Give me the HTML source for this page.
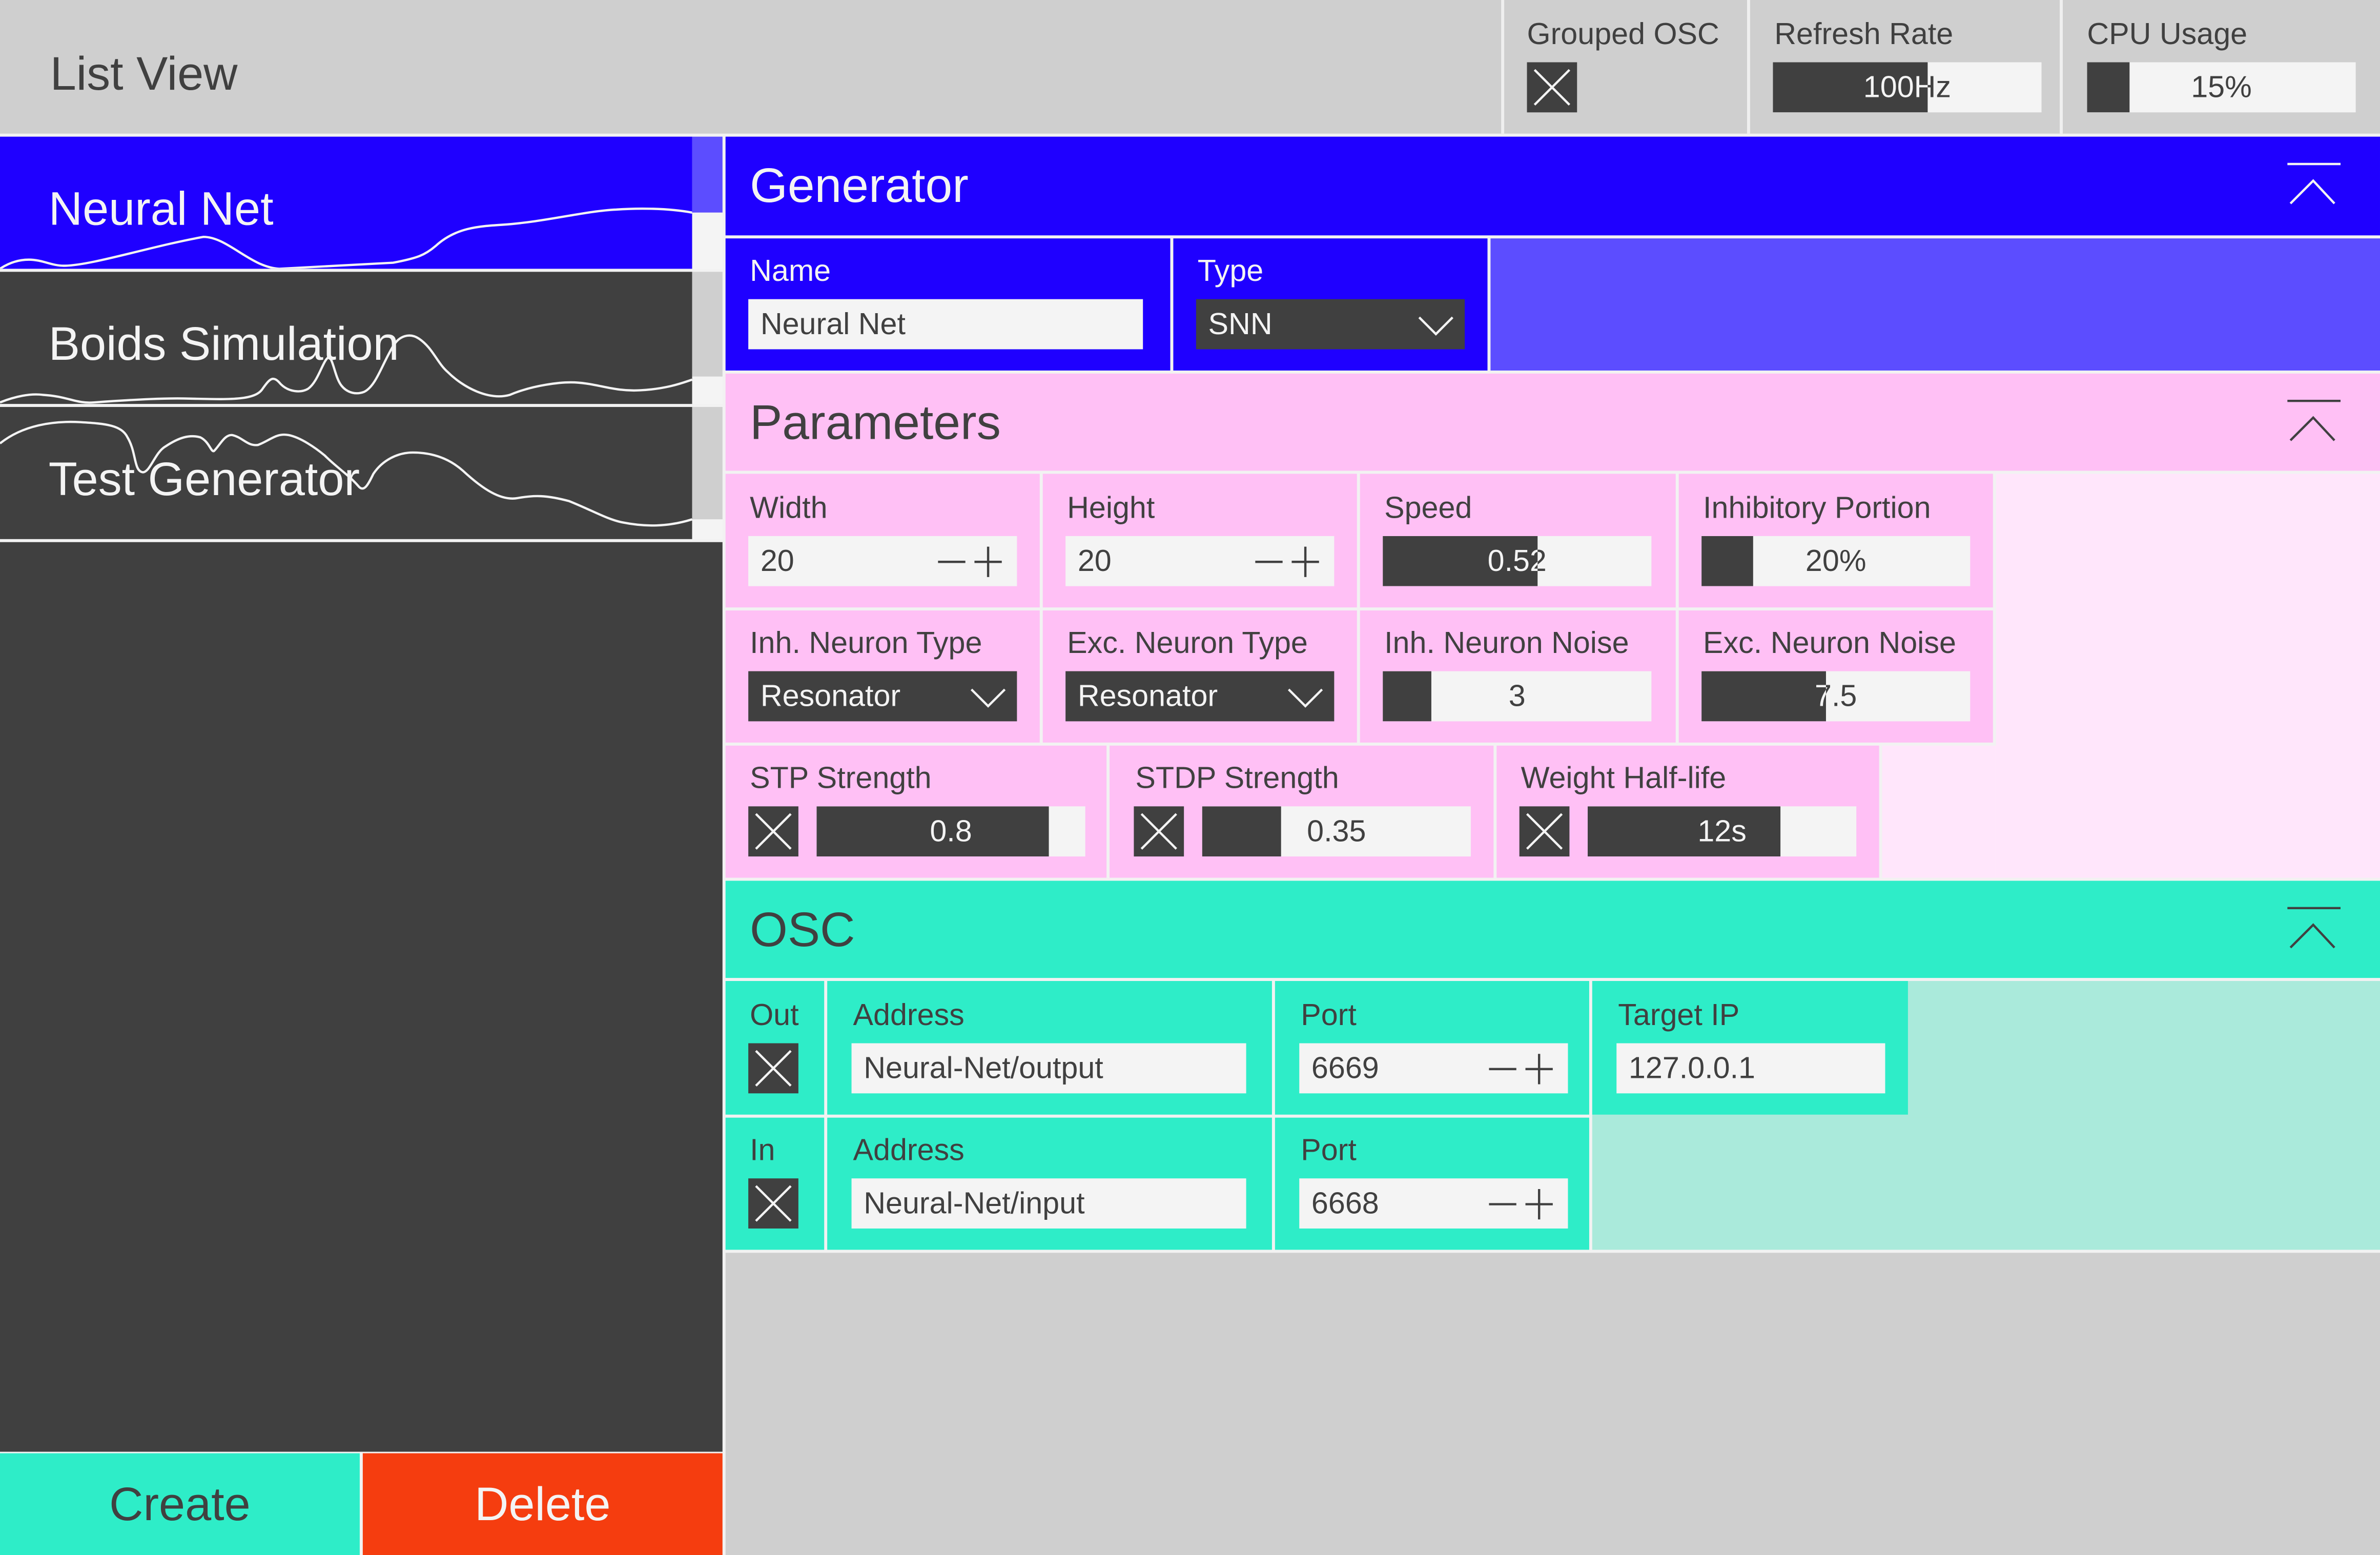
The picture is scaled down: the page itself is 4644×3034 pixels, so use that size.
<!DOCTYPE html>
<html><head><meta charset="utf-8"><style>
*{margin:0;padding:0;box-sizing:border-box}
html,body{width:4644px;height:3034px;overflow:hidden;background:#f2f2f2}
#w{position:absolute;left:0;top:0;width:1568px;height:1024px;transform-origin:0 0;transform:scale(2.96173,2.96289);font-family:"Liberation Sans",sans-serif;color:#404040}
.a{position:absolute}
.lbl{position:absolute;font-size:20px;white-space:nowrap;line-height:1}
.in{position:absolute;background:#f4f4f4;height:33px;font-size:20px;line-height:35px;padding-left:8px;white-space:nowrap;overflow:hidden}
.dd{position:absolute;background:#404040;color:#f4f4f4;height:33px;font-size:20px;line-height:35px;padding-left:8px;white-space:nowrap}
.sl{position:absolute;background:#f4f4f4;height:33px;overflow:hidden}
.sl .t{position:absolute;left:0;top:0;height:33px;line-height:35px;font-size:20px;text-align:center;white-space:nowrap}
.sl .f{position:absolute;left:0;top:0;height:33px;background:#404040;overflow:hidden}
.sl .f .t{color:#f4f4f4}
.cb{position:absolute;width:33px;height:33px;background:#404040}
.h{position:absolute;font-size:32px;line-height:1;white-space:nowrap}
</style></head><body><div id="w">
<!-- top bar -->
<div class="a" style="left:0;top:0;width:1568px;height:88px;background:#cfcfcf"></div>
<div class="h" style="left:33px;top:33px;font-size:31px">List View</div>
<div class="a" style="left:989px;top:0;width:2px;height:88px;background:#efefef"></div>
<div class="a" style="left:1151px;top:0;width:2px;height:88px;background:#efefef"></div>
<div class="a" style="left:1357px;top:0;width:2px;height:88px;background:#efefef"></div>
<div class="lbl" style="left:1006px;top:13px">Grouped OSC</div>
<div class="cb" style="left:1006px;top:41px"><svg width="33" height="33"><path d="M5 5L28 28M28 5L5 28" stroke="#f4f4f4" stroke-width="1.5"/></svg></div>
<div class="lbl" style="left:1169px;top:13px">Refresh Rate</div>
<div class="sl" style="left:1168px;top:41px;width:177px"><span class="t" style="width:177px;left:0">100Hz</span><div class="f" style="width:102px"><span class="t" style="width:177px">100Hz</span></div></div>
<div class="lbl" style="left:1375px;top:13px">CPU Usage</div>
<div class="sl" style="left:1375px;top:41px;width:177px"><span class="t" style="width:177px">15%</span><div class="f" style="width:28px"><span class="t" style="width:177px">15%</span></div></div>

<!-- left list -->
<div class="a" style="left:0;top:357px;width:476px;height:599px;background:#404040"></div>
<div class="a" style="left:0;top:90px;width:456px;height:87px;background:#1f00ff;overflow:hidden">
<svg class="a" style="left:0;top:0" width="456" height="87"><path d="M0 87C6 83 12 81 19 81C28 81 34 85 42 85C60 85 100 72 134 66C150 66 165 86 184 87L259 83C275 80 280 78 287 72C300 60 315 59 331 58C360 56 385 49 406 48C420 47 440 47 456 50" fill="none" stroke="#f4f4f4" stroke-width="1.5"/></svg>
<div class="h" style="left:32px;top:32px;color:#f4f4f4;font-size:31px">Neural Net</div></div>
<div class="a" style="left:456px;top:90px;width:20px;height:50px;background:#5c4dff"></div>
<div class="a" style="left:456px;top:140px;width:20px;height:37px;background:#f4f4f4"></div>
<div class="a" style="left:0;top:179px;width:456px;height:87px;background:#404040;overflow:hidden">
<svg class="a" style="left:0;top:0" width="456" height="87"><path d="M0 86C10 82 20 80 28 81C45 82 50 87 62 86C90 84 110 83 125 83.5C150 84 168 85 173 77C178 70 180 68 185 74C190 79 198 80 203 77C210 72 213 57 217 56C220 60 221 70 225 75C229 80 235 81 240 79C248 75 252 60 259 49C263 42 270 40 276 44C285 50 288 60 295 66C305 76 322 85 336 81C350 75 370 72 381 73C395 74 405 79 422 78C440 77 450 73 456 71" fill="none" stroke="#f4f4f4" stroke-width="1.5"/></svg>
<div class="h" style="left:32px;top:32px;color:#f4f4f4;font-size:31px">Boids Simulation</div></div>
<div class="a" style="left:456px;top:179px;width:20px;height:69px;background:#cfcfcf"></div>
<div class="a" style="left:456px;top:248px;width:20px;height:18px;background:#f4f4f4"></div>
<div class="a" style="left:0;top:268px;width:456px;height:87px;background:#404040;overflow:hidden">
<svg class="a" style="left:0;top:0" width="456" height="87"><path d="M0 24C15 12 35 9 53 10C70 11 80 12 84 20C90 30 88 42 94 43C99 43 102 30 109 26C118 20 125 18 132 20C138 23 139 30 141 29C145 25 148 18 153 18.5C160 20 163 26 170 25C178 22 182 17 190 18.5C198 20 208 27 214 32C222 40 230 45 236 52C240 57 243 50 246 44C252 35 262 30 272 30C285 30 296 34 305 42C318 54 330 62 341 60C352 58 360 58 375 62C390 68 400 74 410 76C425 79 440 79 456 74" fill="none" stroke="#f4f4f4" stroke-width="1.5"/></svg>
<div class="h" style="left:32px;top:32px;color:#f4f4f4;font-size:31px">Test Generator</div></div>
<div class="a" style="left:456px;top:268px;width:20px;height:74px;background:#cfcfcf"></div>
<div class="a" style="left:456px;top:342px;width:20px;height:13px;background:#f4f4f4"></div>
<div class="a" style="left:0;top:957px;width:237px;height:67px;background:#2eedc8"></div>
<div class="h" style="left:0;top:975px;width:237px;text-align:center;font-size:31px">Create</div>
<div class="a" style="left:239px;top:957px;width:237px;height:67px;background:#f53d0f"></div>
<div class="h" style="left:239px;top:975px;width:237px;text-align:center;font-size:31px;color:#f4f4f4">Delete</div>

<!-- right -->
<div class="a" style="left:478px;top:825px;width:1090px;height:199px;background:#cfcfcf"></div>
<!-- generator -->
<div class="a" style="left:478px;top:90px;width:1090px;height:65px;background:#1f00ff"></div>
<div class="h" style="left:494px;top:106px;color:#f4f4f4">Generator</div>
<svg class="a" style="left:1500px;top:100px" width="50" height="45"><path d="M7 8H42M9 34L24 19L38 34" fill="none" stroke="#f4f4f4" stroke-width="1.5"/></svg>
<div class="a" style="left:478px;top:157px;width:293px;height:87px;background:#1f00ff"></div>
<div class="a" style="left:773px;top:157px;width:207px;height:87px;background:#1f00ff"></div>
<div class="a" style="left:982px;top:157px;width:586px;height:87px;background:#5c4dff"></div>
<div class="lbl" style="left:494px;top:169px;color:#f4f4f4">Name</div>
<div class="in" style="left:493px;top:197px;width:260px">Neural Net</div>
<div class="lbl" style="left:789px;top:169px;color:#f4f4f4">Type</div>
<div class="dd" style="left:788px;top:197px;width:177px;background:#404040">SNN<svg class="a" style="right:6px;top:8px" width="26" height="18"><path d="M2 4L13 15L24 4" fill="none" stroke="#f4f4f4" stroke-width="1.5"/></svg></div>
<!-- parameters -->
<div class="a" style="left:478px;top:246px;width:1090px;height:64px;background:#ffc0f5"></div>
<div class="h" style="left:494px;top:262px">Parameters</div>
<svg class="a" style="left:1500px;top:256px" width="50" height="45"><path d="M7 8H42M9 34L24 19L38 34" fill="none" stroke="#404040" stroke-width="1.5"/></svg>
<div class="a" style="left:1315px;top:312px;width:253px;height:266px;background:#ffe6fb"></div>
<div class="a" style="left:1240px;top:491px;width:75px;height:87px;background:#ffe6fb"></div>
<div class="a" style="left:478px;top:312px;width:207px;height:88px;background:#ffc0f5"></div>
<div class="a" style="left:687px;top:312px;width:207px;height:88px;background:#ffc0f5"></div>
<div class="a" style="left:896px;top:312px;width:208px;height:88px;background:#ffc0f5"></div>
<div class="a" style="left:1106px;top:312px;width:207px;height:88px;background:#ffc0f5"></div>
<div class="a" style="left:478px;top:402px;width:207px;height:87px;background:#ffc0f5"></div>
<div class="a" style="left:687px;top:402px;width:207px;height:87px;background:#ffc0f5"></div>
<div class="a" style="left:896px;top:402px;width:208px;height:87px;background:#ffc0f5"></div>
<div class="a" style="left:1106px;top:402px;width:207px;height:87px;background:#ffc0f5"></div>
<div class="a" style="left:478px;top:491px;width:251px;height:87px;background:#ffc0f5"></div>
<div class="a" style="left:731px;top:491px;width:253px;height:87px;background:#ffc0f5"></div>
<div class="a" style="left:986px;top:491px;width:252px;height:87px;background:#ffc0f5"></div>

<div class="lbl" style="left:494px;top:325px">Width</div>
<div class="in" style="left:493px;top:353px;width:177px">20<svg class="a" style="right:6px;top:5px" width="48" height="24"><path d="M2 12H20M26 12H44M35 2V22" fill="none" stroke="#404040" stroke-width="1.5"/></svg></div>
<div class="lbl" style="left:703px;top:325px">Height</div>
<div class="in" style="left:702px;top:353px;width:177px">20<svg class="a" style="right:6px;top:5px" width="48" height="24"><path d="M2 12H20M26 12H44M35 2V22" fill="none" stroke="#404040" stroke-width="1.5"/></svg></div>
<div class="lbl" style="left:912px;top:325px">Speed</div>
<div class="sl" style="left:911px;top:353px;width:177px"><span class="t" style="width:177px">0.52</span><div class="f" style="width:102px"><span class="t" style="width:177px">0.52</span></div></div>
<div class="lbl" style="left:1122px;top:325px">Inhibitory Portion</div>
<div class="sl" style="left:1121px;top:353px;width:177px"><span class="t" style="width:177px">20%</span><div class="f" style="width:34px"><span class="t" style="width:177px">20%</span></div></div>

<div class="lbl" style="left:494px;top:414px">Inh. Neuron Type</div>
<div class="dd" style="left:493px;top:442px;width:177px">Resonator<svg class="a" style="right:6px;top:8px" width="26" height="18"><path d="M2 4L13 15L24 4" fill="none" stroke="#f4f4f4" stroke-width="1.5"/></svg></div>
<div class="lbl" style="left:703px;top:414px">Exc. Neuron Type</div>
<div class="dd" style="left:702px;top:442px;width:177px">Resonator<svg class="a" style="right:6px;top:8px" width="26" height="18"><path d="M2 4L13 15L24 4" fill="none" stroke="#f4f4f4" stroke-width="1.5"/></svg></div>
<div class="lbl" style="left:912px;top:414px">Inh. Neuron Noise</div>
<div class="sl" style="left:911px;top:442px;width:177px"><span class="t" style="width:177px">3</span><div class="f" style="width:32px"><span class="t" style="width:177px">3</span></div></div>
<div class="lbl" style="left:1122px;top:414px">Exc. Neuron Noise</div>
<div class="sl" style="left:1121px;top:442px;width:177px"><span class="t" style="width:177px">7.5</span><div class="f" style="width:82px"><span class="t" style="width:177px">7.5</span></div></div>

<div class="lbl" style="left:494px;top:503px">STP Strength</div>
<div class="cb" style="left:493px;top:531px"><svg width="33" height="33"><path d="M5 5L28 28M28 5L5 28" stroke="#f4f4f4" stroke-width="1.5"/></svg></div>
<div class="sl" style="left:538px;top:531px;width:177px"><span class="t" style="width:177px">0.8</span><div class="f" style="width:153px"><span class="t" style="width:177px">0.8</span></div></div>
<div class="lbl" style="left:748px;top:503px">STDP Strength</div>
<div class="cb" style="left:747px;top:531px"><svg width="33" height="33"><path d="M5 5L28 28M28 5L5 28" stroke="#f4f4f4" stroke-width="1.5"/></svg></div>
<div class="sl" style="left:792px;top:531px;width:177px"><span class="t" style="width:177px">0.35</span><div class="f" style="width:52px"><span class="t" style="width:177px">0.35</span></div></div>
<div class="lbl" style="left:1002px;top:503px">Weight Half-life</div>
<div class="cb" style="left:1001px;top:531px"><svg width="33" height="33"><path d="M5 5L28 28M28 5L5 28" stroke="#f4f4f4" stroke-width="1.5"/></svg></div>
<div class="sl" style="left:1046px;top:531px;width:177px"><span class="t" style="width:177px">12s</span><div class="f" style="width:127px"><span class="t" style="width:177px">12s</span></div></div>

<!-- OSC -->
<div class="a" style="left:478px;top:580px;width:1090px;height:64px;background:#2eedc8"></div>
<div class="h" style="left:494px;top:596px">OSC</div>
<svg class="a" style="left:1500px;top:590px" width="50" height="45"><path d="M7 8H42M9 34L24 19L38 34" fill="none" stroke="#404040" stroke-width="1.5"/></svg>
<div class="a" style="left:1049px;top:646px;width:519px;height:177px;background:#aaeadb"></div>
<div class="a" style="left:478px;top:646px;width:65px;height:88px;background:#2eedc8"></div>
<div class="a" style="left:545px;top:646px;width:293px;height:88px;background:#2eedc8"></div>
<div class="a" style="left:840px;top:646px;width:207px;height:88px;background:#2eedc8"></div>
<div class="a" style="left:1049px;top:646px;width:208px;height:88px;background:#2eedc8"></div>
<div class="a" style="left:1257px;top:734px;width:311px;height:2px;background:#aaeadb"></div>
<div class="a" style="left:478px;top:736px;width:65px;height:87px;background:#2eedc8"></div>
<div class="a" style="left:545px;top:736px;width:293px;height:87px;background:#2eedc8"></div>
<div class="a" style="left:840px;top:736px;width:207px;height:87px;background:#2eedc8"></div>

<div class="lbl" style="left:494px;top:659px">Out</div>
<div class="cb" style="left:493px;top:687px"><svg width="33" height="33"><path d="M5 5L28 28M28 5L5 28" stroke="#f4f4f4" stroke-width="1.5"/></svg></div>
<div class="lbl" style="left:562px;top:659px">Address</div>
<div class="in" style="left:561px;top:687px;width:260px">Neural-Net/output</div>
<div class="lbl" style="left:857px;top:659px">Port</div>
<div class="in" style="left:856px;top:687px;width:177px">6669<svg class="a" style="right:6px;top:5px" width="48" height="24"><path d="M2 12H20M26 12H44M35 2V22" fill="none" stroke="#404040" stroke-width="1.5"/></svg></div>
<div class="lbl" style="left:1066px;top:659px">Target IP</div>
<div class="in" style="left:1065px;top:687px;width:177px">127.0.0.1</div>

<div class="lbl" style="left:494px;top:748px">In</div>
<div class="cb" style="left:493px;top:776px"><svg width="33" height="33"><path d="M5 5L28 28M28 5L5 28" stroke="#f4f4f4" stroke-width="1.5"/></svg></div>
<div class="lbl" style="left:562px;top:748px">Address</div>
<div class="in" style="left:561px;top:776px;width:260px">Neural-Net/input</div>
<div class="lbl" style="left:857px;top:748px">Port</div>
<div class="in" style="left:856px;top:776px;width:177px">6668<svg class="a" style="right:6px;top:5px" width="48" height="24"><path d="M2 12H20M26 12H44M35 2V22" fill="none" stroke="#404040" stroke-width="1.5"/></svg></div>
</div></body></html>
